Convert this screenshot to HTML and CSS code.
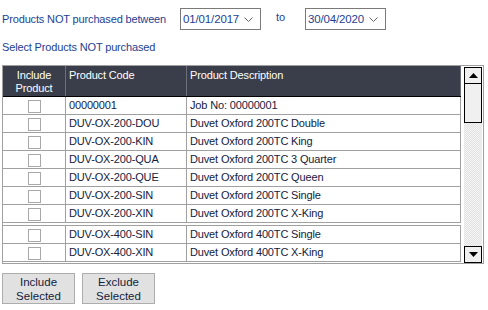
FILE: index.html
```html
<!DOCTYPE html>
<html lang="en">
<head>
    <meta charset="UTF-8">
    <title>Products Not Purchased</title>
    <link rel="stylesheet" href="styles.css">
</head>
<body>
    <!-- Date range -->
    <div class="range-row">
        <span class="label">Products NOT purchased between</span>
        <div class="date-box">
            <span>01/01/2017</span>
            <svg class="chevron" width="9" height="5" viewBox="0 0 9 5"><polyline points="0.5,0.5 4.5,4.5 8.5,0.5" fill="none" stroke="#666" stroke-width="1"/></svg>
        </div>
        <span class="label to-label">to</span>
        <div class="date-box">
            <span>30/04/2020</span>
            <svg class="chevron" width="9" height="5" viewBox="0 0 9 5"><polyline points="0.5,0.5 4.5,4.5 8.5,0.5" fill="none" stroke="#666" stroke-width="1"/></svg>
        </div>
    </div>

    <div class="label sub-label">Select Products NOT purchased</div>

    <!-- Product grid -->
    <div class="grid">
        <div class="grid-table">
            <div class="grid-head">
                <div class="cell center">Include<br>Product</div>
                <div class="cell">Product Code</div>
                <div class="cell">Product Description</div>
            </div>
            <div class="grid-row">
                <div class="cell center"><span class="check"></span></div>
                <div class="cell">00000001</div>
                <div class="cell">Job No: 00000001</div>
            </div>
            <div class="grid-row">
                <div class="cell center"><span class="check"></span></div>
                <div class="cell">DUV-OX-200-DOU</div>
                <div class="cell">Duvet Oxford 200TC Double</div>
            </div>
            <div class="grid-row">
                <div class="cell center"><span class="check"></span></div>
                <div class="cell">DUV-OX-200-KIN</div>
                <div class="cell">Duvet Oxford 200TC King</div>
            </div>
            <div class="grid-row">
                <div class="cell center"><span class="check"></span></div>
                <div class="cell">DUV-OX-200-QUA</div>
                <div class="cell">Duvet Oxford 200TC 3 Quarter</div>
            </div>
            <div class="grid-row">
                <div class="cell center"><span class="check"></span></div>
                <div class="cell">DUV-OX-200-QUE</div>
                <div class="cell">Duvet Oxford 200TC Queen</div>
            </div>
            <div class="grid-row">
                <div class="cell center"><span class="check"></span></div>
                <div class="cell">DUV-OX-200-SIN</div>
                <div class="cell">Duvet Oxford 200TC Single</div>
            </div>
            <div class="grid-row">
                <div class="cell center"><span class="check"></span></div>
                <div class="cell">DUV-OX-200-XIN</div>
                <div class="cell">Duvet Oxford 200TC X-King</div>
            </div>
            <div class="grid-row split">
                <div class="cell center"><span class="check"></span></div>
                <div class="cell">DUV-OX-400-SIN</div>
                <div class="cell">Duvet Oxford 400TC Single</div>
            </div>
            <div class="grid-row">
                <div class="cell center"><span class="check"></span></div>
                <div class="cell">DUV-OX-400-XIN</div>
                <div class="cell">Duvet Oxford 400TC X-King</div>
            </div>
        </div>

        <!-- Scrollbar -->
        <div class="scroll-area">
            <div class="scrollbar">
                <div class="scroll-btn">
                    <svg width="9" height="5" viewBox="0 0 9 5"><polygon points="0,5 4.5,0 9,5" fill="#000"/></svg>
                </div>
                <div class="scroll-thumb"></div>
                <div class="scroll-track"></div>
                <div class="scroll-btn">
                    <svg width="9" height="5" viewBox="0 0 9 5"><polygon points="0,0 9,0 4.5,5" fill="#000"/></svg>
                </div>
            </div>
        </div>
    </div>

    <!-- Actions -->
    <div class="actions">
        <button class="action-btn">Include<br>Selected</button>
        <button class="action-btn">Exclude<br>Selected</button>
    </div>
</body>
</html>
```

FILE: styles.css
```css
/* Basic styling */
body {
    margin: 0;
    padding: 8px 0 0 2px;
    font-family: "Liberation Sans", Arial, sans-serif;
    font-size: 11px;
    letter-spacing: -0.15px;
    color: #14213d;
    background-color: #fff;
}

.label {
    color: #1c3f94;
}

.range-row {
    display: flex;
    align-items: center;
    height: 22px;
}

.date-box {
    display: flex;
    align-items: center;
    justify-content: space-between;
    box-sizing: border-box;
    width: 81px;
    height: 22px;
    margin-left: 14px;
    padding: 0 7px 0 2px;
    border: 1px solid #7a7a7a;
    color: #1c3f94;
    font-size: 11.5px;
}

.to-label {
    margin-left: 15px;
    margin-right: 20px;
    position: relative;
    top: -2px;
}

.to-label + .date-box {
    margin-left: 0;
}

.sub-label {
    margin-top: 11px;
    height: 15px;
}

/* Grid */
.grid {
    display: flex;
    box-sizing: border-box;
    width: 482px;
    height: 199px;
    margin-top: 9px;
    border: 1px solid #a0a0a0;
}

.grid-table {
    width: 458px;
}

.grid-head,
.grid-row {
    display: grid;
    grid-template-columns: 63px 121px 274px;
}

.grid-head {
    height: 31px;
    background-color: #3a3e4a;
    color: #fff;
    border-bottom: 1px solid #000;
    box-sizing: border-box;
}

.grid-head .cell {
    padding: 3px 0 0 3px;
    line-height: 13px;
    border-right: 1px solid #6c707a;
}

.grid-head .cell.center {
    padding-left: 0;
}

.grid-row {
    height: 18px;
    box-sizing: border-box;
    border-bottom: 1px solid #a0a0a0;
}

.grid-row.split {
    margin-top: 2px;
    height: 19px;
    border-top: 1px solid #a0a0a0;
}

.cell {
    box-sizing: border-box;
    padding-left: 3px;
    border-right: 1px solid #a0a0a0;
    line-height: 17px;
    white-space: nowrap;
    overflow: hidden;
}

.cell.center {
    text-align: center;
    padding-left: 0;
}

.check {
    display: inline-block;
    width: 11px;
    height: 11px;
    margin-top: 3px;
    border: 1px solid #a8a8a8;
    vertical-align: top;
}

/* Scrollbar */
.scroll-area {
    flex: 1;
    padding: 1px 1px 0 3px;
}

.scrollbar {
    display: flex;
    flex-direction: column;
    height: 196px;
}

.scroll-btn {
    display: flex;
    align-items: center;
    justify-content: center;
    box-sizing: border-box;
    height: 17px;
    border: 1px solid #000;
    background-color: #f0f0f0;
}

.scroll-thumb {
    box-sizing: border-box;
    height: 40px;
    margin-top: -1px;
    border: 1px solid #000;
    background-color: #f0f0f0;
}

.scroll-track {
    flex: 1;
    background: repeating-conic-gradient(#f4f4f4 0 25%, #e2e2e2 0 50%) 0 0 / 2px 2px;
}

/* Buttons */
.actions {
    display: flex;
    gap: 7px;
    margin-top: 9px;
}

.action-btn {
    width: 73px;
    height: 31px;
    padding: 0;
    font-family: "Liberation Sans", Arial, sans-serif;
    font-size: 11.5px;
    line-height: 14px;
    color: #14213d;
    background-color: #e1e1e1;
    border: 1px solid #adadad;
}
```
